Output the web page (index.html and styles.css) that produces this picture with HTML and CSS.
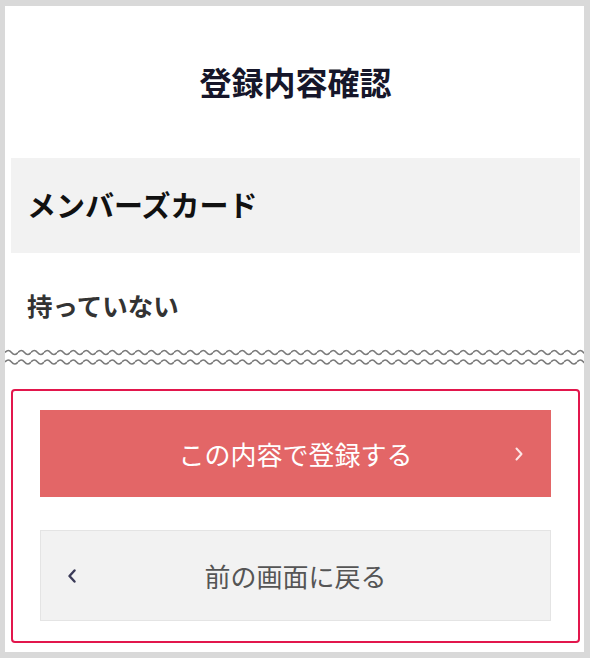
FILE: index.html
```html
<!DOCTYPE html>
<html lang="ja">
<head>
<meta charset="utf-8">
<link rel="stylesheet" href="styles.css">
</head>
<body>
<div class="page">
  <h1 class="title">登録内容確認</h1>
  <div class="band"><h2 class="band-text">メンバーズカード</h2></div>
  <p class="answer">持っていない</p>
  <svg class="wave" width="579" height="20" viewBox="0 0 579 20" aria-hidden="true">
    <defs>
      <pattern id="wv" x="0" y="0" width="13" height="20" patternUnits="userSpaceOnUse">
        <path d="M0 5.5 Q3.25 1.5 6.5 5.5 T13 5.5" fill="none" stroke="#7a7a7a" stroke-width="1.6"/>
        <path d="M0 15 Q3.25 11 6.5 15 T13 15" fill="none" stroke="#7a7a7a" stroke-width="1.6"/>
      </pattern>
    </defs>
    <rect x="0" y="0" width="579" height="20" fill="url(#wv)"/>
  </svg>
  <div class="actions">
    <button class="btn btn-primary"><span class="label">この内容で登録する</span>
      <svg class="chev chev-right" width="10" height="14" viewBox="0 0 10 14" aria-hidden="true"><polyline points="2.5,1.5 7.5,7 2.5,12.5" fill="none" stroke="#fde6e6" stroke-width="2" stroke-linecap="round" stroke-linejoin="round"/></svg>
    </button>
    <button class="btn btn-back">
      <svg class="chev chev-left" width="10" height="14" viewBox="0 0 10 14" aria-hidden="true"><polyline points="7.5,1.5 2.5,7 7.5,12.5" fill="none" stroke="#3b3b58" stroke-width="2.4" stroke-linecap="round" stroke-linejoin="round"/></svg>
      <span class="label">前の画面に戻る</span>
    </button>
  </div>
</div>
</body>
</html>
```

FILE: styles.css
```css
html, body {
  margin: 0;
  padding: 0;
  background: #d9d9d9;
}
body {
  padding: 6px 6px 6px 5px;
  font-family: "Noto Sans CJK JP", "Noto Sans", sans-serif;
}
.page {
  width: 579px;
  height: 646px;
  background: #fff;
  box-sizing: border-box;
  padding: 0 4px 0 6px;
  display: flex;
  flex-direction: column;
}
.title {
  margin: 0;
  height: 152px;
  display: flex;
  align-items: center;
  justify-content: center;
  font-size: 32px;
  font-weight: 700;
  color: #16162a;
  line-height: 1;
  padding-bottom: 2px;
  box-sizing: border-box;
}
.band {
  background: #f2f2f2;
  height: 95px;
  display: flex;
  align-items: center;
  padding-left: 16px;
}
.band-text {
  margin: 0;
  font-size: 29px;
  font-weight: 700;
  color: #111;
  line-height: 1;
  padding-bottom: 3px;
}
.answer {
  margin: 0;
  height: 94px;
  display: flex;
  align-items: center;
  padding-left: 16px;
  padding-top: 10px;
  box-sizing: border-box;
  font-size: 25.5px;
  font-weight: 700;
  color: #333;
  line-height: 1;
}
.wave {
  display: block;
  margin-left: -6px;
  margin-top: 0;
}
.actions {
  margin-top: 22px;
  border: 2px solid #e2164c;
  border-radius: 4px;
  padding: 19px 27px 20px 27px;
  display: flex;
  flex-direction: column;
  gap: 33px;
}
.btn {
  position: relative;
  display: flex;
  align-items: center;
  justify-content: center;
  width: 100%;
  font-family: inherit;
  font-size: 26px;
  line-height: 1;
  cursor: pointer;
  margin: 0;
}
.btn-primary {
  height: 87px;
  background: #e36667;
  color: #fff;
  border: none;
}
.btn-back {
  height: 91px;
  background: #f2f2f2;
  color: #555;
  border: 1px solid #e4e4e4;
}
.label {
  padding-top: 1px;
}
.chev {
  position: absolute;
  top: 50%;
  margin-top: -7px;
  display: block;
}
.chev-right {
  right: 27px;
}
.chev-left {
  left: 26px;
}
```
